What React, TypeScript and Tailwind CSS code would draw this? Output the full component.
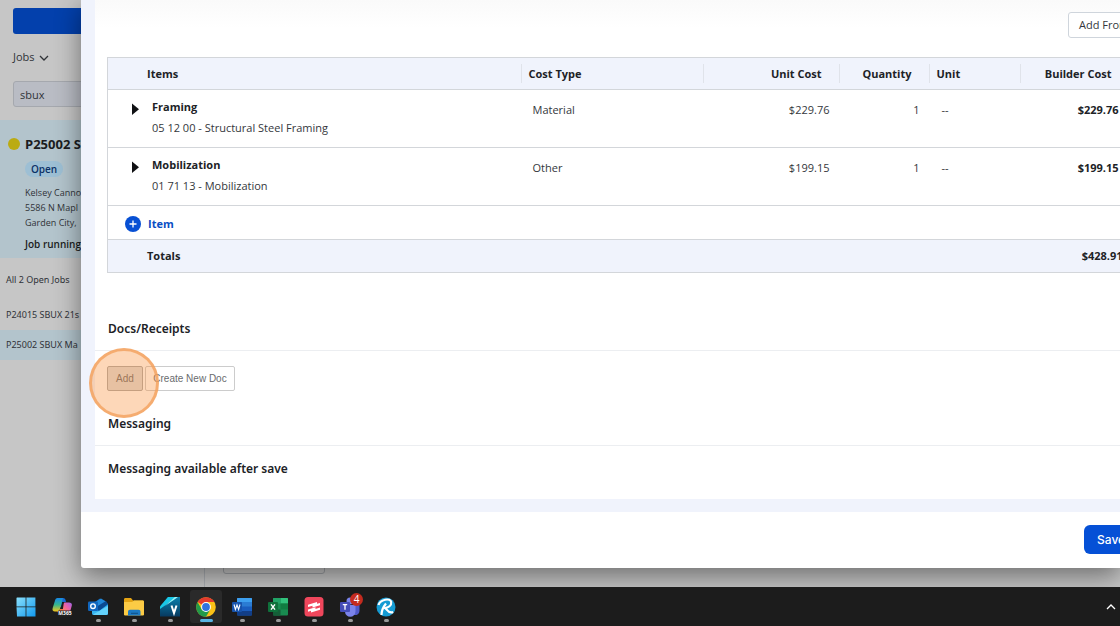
import type { ReactNode } from "react";

type CostItem = {
  name: string;
  code: string;
  type: string;
  unitCost: string;
  quantity: string;
  unit: string;
  builderCost: string;
};

const items: CostItem[] = [
  {
    name: "Framing",
    code: "05 12 00 - Structural Steel Framing",
    type: "Material",
    unitCost: "$229.76",
    quantity: "1",
    unit: "--",
    builderCost: "$229.76",
  },
  {
    name: "Mobilization",
    code: "01 71 13 - Mobilization",
    type: "Other",
    unitCost: "$199.15",
    quantity: "1",
    unit: "--",
    builderCost: "$199.15",
  },
];

function Sidebar() {
  return (
    <aside className="w-[205px] border-r border-[#acafb4] pt-2 text-[#303338]">
      <div className="px-[13px]">
        <button type="button" aria-label="New job" className="block h-[26px] w-full rounded-[3px] bg-[#0340ac]" />
        <button type="button" className="mt-3 flex h-[22px] items-center gap-1 text-[11px]">
          Jobs
          <svg viewBox="0 0 10 10" className="mt-[2px] h-[10px] w-[10px]" fill="none" stroke="currentColor" strokeWidth="1.3">
            <path d="M1 3l4 4 4-4" />
          </svg>
        </button>
        <input
          type="text"
          aria-label="Search jobs"
          defaultValue="sbux"
          className="mt-[13px] block h-[26px] w-full rounded-[3px] border border-[#a5a8ae] bg-[#b9bcc4] px-[6px] text-[11px] outline-none"
        />
      </div>
      <section className="mt-[13px] h-[138px] bg-[#b3c4cc] pt-[14px] pl-[25px]">
        <h2 className="-ml-[17px] flex items-center gap-[5px] text-[13px] leading-5 font-bold text-[#1b1d21]">
          <span className="h-3 w-3 rounded-full bg-[#bbab12]" />
          P25002 S
        </h2>
        <div className="mt-[7px] flex">
          <span className="rounded-full bg-[#9dbfd4] px-[6px] text-[10px] leading-4 font-semibold text-[#0b3166]">
            Open
          </span>
        </div>
        <p className="mt-2 text-[9px] leading-[15px]">
          Kelsey Canno
          <br />
          5586 N Mapl
          <br />
          Garden City,
        </p>
        <p className="mt-[7px] text-[10px] leading-[15px] font-semibold text-[#1b1d21]">Job running</p>
      </section>
      <p className="mt-[7px] px-[6px] font-[Noto_Sans,sans-serif] text-[9px] leading-[30px]">All 2 Open Jobs</p>
      <ul className="mt-[5px] font-[Noto_Sans,sans-serif] text-[9px] leading-[30px]">
        <li>
          <a href="#p24015" className="block px-[6px]">P24015 SBUX 21s</a>
        </li>
        <li>
          <a href="#p25002" className="block bg-[#b3c4cc] px-[6px]">P25002 SBUX Ma</a>
        </li>
      </ul>
    </aside>
  );
}

function HeadCell({ children, right }: { children?: ReactNode; right?: boolean }) {
  return (
    <th scope="col" className="p-0">
      <div className={`h-[19px] border-l border-[#e0e3ea] leading-[19px] ${right ? "pr-[17px] text-right" : "pl-[7px] text-left"}`}>
        {children}
      </div>
    </th>
  );
}

function ItemsTable() {
  return (
    <table className="w-[1240px] table-fixed border-collapse border border-[#d3d6da] text-[11px] text-[#34373c]">
      <colgroup>
        <col className="w-[413px]" />
        <col className="w-[182px]" />
        <col className="w-[136px]" />
        <col className="w-[90px]" />
        <col className="w-[91px]" />
        <col className="w-[109px]" />
        <col />
      </colgroup>
      <thead>
        <tr className="h-[32px] border-b border-[#d3d6da] bg-[#f0f3fc] font-bold text-[#202226]">
          <th scope="col" className="p-0 pl-[39px] text-left leading-[19px]">Items</th>
          <HeadCell>Cost Type</HeadCell>
          <HeadCell right>Unit Cost</HeadCell>
          <HeadCell right>Quantity</HeadCell>
          <HeadCell>Unit</HeadCell>
          <HeadCell right>Builder Cost</HeadCell>
          <HeadCell />
        </tr>
      </thead>
      <tbody>
        {items.map((item) => (
          <tr key={item.code} className="h-[58px] border-b border-[#d3d6da] align-top leading-5">
            <td className="p-0 pt-[7px]">
              <div className="flex">
                <button type="button" aria-label={`Expand ${item.name}`} className="mt-[6px] ml-6 h-3 w-5">
                  <svg viewBox="0 0 20 12" className="h-3 w-5" fill="#101114">
                    <path d="M0 .5l7 5.700-7 5.800z" />
                  </svg>
                </button>
                <div>
                  <div className="font-bold text-[#202226]">{item.name}</div>
                  <div className="leading-[22px]">{item.code}</div>
                </div>
              </div>
            </td>
            <td className="p-0 pt-[10px] pl-3">{item.type}</td>
            <td className="p-0 pt-[10px] pr-[9px] text-right">{item.unitCost}</td>
            <td className="p-0 pt-[10px] pr-[9px] text-right">{item.quantity}</td>
            <td className="p-0 pt-[10px] pl-[13px]">{item.unit}</td>
            <td className="p-0 pt-[10px] pr-[10px] text-right font-bold text-[#202226]">{item.builderCost}</td>
            <td />
          </tr>
        ))}
        <tr className="h-[34px] border-b border-[#d3d6da]">
          <td colSpan={7} className="p-0 pt-[3px] pl-[17px]">
            <button type="button" className="flex items-center gap-[7px] font-bold text-[#0a4fc4]">
              <svg viewBox="0 0 16 16" className="h-4 w-4" fill="none">
                <circle cx="8" cy="8" r="8" fill="#0750d4" />
                <path d="M8 4.500v7M4.500 8h7" stroke="#fff" strokeWidth="1.300" />
              </svg>
              Item
            </button>
          </td>
        </tr>
      </tbody>
      <tfoot>
        <tr className="h-[33px] bg-[#f0f3fc] font-bold text-[#202226]">
          <th scope="row" colSpan={5} className="p-0 pl-[39px] text-left">Totals</th>
          <td className="p-0 pr-[6px] text-right">$428.91</td>
          <td />
        </tr>
      </tfoot>
    </table>
  );
}

function Dialog() {
  return (
    <div
      role="dialog"
      aria-label="Purchase order"
      className="relative mb-[19px] ml-[81px] overflow-hidden rounded-bl-[3px] bg-white shadow-[0_8px_26px_rgba(0,0,0,0.45)]"
    >
      <div className="bg-[#f0f3fc] pb-[13px] pl-[14px]">
        <div className="bg-white bg-linear-to-b from-[#fafafa] to-white to-[28px] pt-3 pb-5">
          <div className="flex justify-end overflow-hidden">
            <button
              type="button"
              className="-mr-10 h-[26px] w-[92px] shrink-0 rounded-[3px] border border-[#cfd5dc] bg-white pl-[10px] text-left text-[11px] whitespace-nowrap text-[#34373c]"
            >
              Add From
            </button>
          </div>
          <div className="mt-[19px] overflow-hidden pl-3">
            <ItemsTable />
          </div>

          <section className="mt-[46px]">
            <h3 className="border-b border-[#eceef1] pb-[11px] pl-[13px] font-[Noto_Sans,sans-serif] text-[12px] leading-5 font-semibold text-[#202226]">
              Docs/Receipts
            </h3>
            <div className="flex gap-[2px] pt-[15px] pl-3 font-[Liberation_Sans,Arial,sans-serif] text-[10px] text-[#6a6b6e]">
              <div className="relative">
                <button type="button" className="h-[25px] w-9 rounded-[2px] border border-[#aaa] bg-[#dedede]">
                  Add
                </button>
                <span className="pointer-events-none absolute -top-[18px] -left-[18px] h-[70px] w-[70px] rounded-full border-[3px] border-[#f4a25f]/80 bg-[#f98b33]/35" />
              </div>
              <button type="button" className="h-[25px] w-[90px] rounded-[2px] border border-[#ccc]">
                Create New Doc
              </button>
            </div>
          </section>

          <section className="mt-[23px]">
            <h3 className="border-b border-[#eceef1] pb-[11px] pl-[13px] font-[Noto_Sans,sans-serif] text-[12px] leading-5 font-semibold text-[#202226]">
              Messaging
            </h3>
            <p className="pt-[13px] pl-[13px] font-[Noto_Sans,sans-serif] text-[12px] leading-5 font-semibold text-[#202226]">
              Messaging available after save
            </p>
          </section>
        </div>
      </div>
      <footer className="flex h-[56px] justify-end pt-[13px]">
        <button
          type="button"
          className="-mr-5 h-[29px] w-14 rounded-[6px] bg-[#0550d6] pl-[13px] text-left font-[Inter,sans-serif] text-[12px] font-medium text-white"
        >
          Save
        </button>
      </footer>
    </div>
  );
}

function WindowsIcon() {
  return (
    <>
      <linearGradient id="win" x1="0" y1="0" x2="1" y2="1">
        <stop stopColor="#8ae0fc" />
        <stop offset="1" stopColor="#1199ee" />
      </linearGradient>
      <path fill="url(#win)" d="M1 .5h8.600v9H.5V1zM10.400.5h9v9h-9zM.5 10.300h9.100v9.200H1zM10.400 10.300h9.100v9.200h-9.100z" />
    </>
  );
}

function CopilotIcon() {
  return (
    <>
      <linearGradient id="cop1" x1="0" y1="0" x2="0" y2="1">
        <stop stopColor="#1688e8" />
        <stop offset=".5" stopColor="#36b68c" />
        <stop offset="1" stopColor="#f5c71a" />
      </linearGradient>
      <linearGradient id="cop2" x1="1" y1="0" x2="0" y2="1">
        <stop stopColor="#9b63eb" />
        <stop offset=".5" stopColor="#ed60a3" />
        <stop offset="1" stopColor="#ff8b50" />
      </linearGradient>
      <path fill="#1769d2" d="M6 1h5c2 0 2.500 1 3 4h-4L9 10H5z" />
      <path fill="url(#cop1)" d="M5.500 1H11L8 12c-.6 2-1.200 2.500-3 2.500H3C.8 14.500.1 13 .7 11L3 3.500C3.500 2 4 1 5.500 1z" />
      <path fill="#f2703f" d="M5 14.500c2 0 2.500-1 3-2.500h4l-1 4H8c-1.500 0-2-.5-3-1.500z" />
      <path fill="url(#cop2)" d="M12.500 5.500H17c2.500 0 3.300 1.500 2.700 3.500L18 15h-7.500l1-7c.2-1.500.5-2.500 1-2.500z" />
      <rect x="6" y="13.500" width="14" height="6" rx="1" fill="#222" />
      <text x="13" y="18.300" fontSize="5" fontWeight="700" textAnchor="middle" fill="#fff">M365</text>
    </>
  );
}

function OutlookIcon() {
  return (
    <>
      <path fill="#1268bb" d="M4 7l8-5.500L20 7v10.500H4z" />
      <path fill="#2188d9" d="M6 6l7-4.500 5 3L8 11z" />
      <path fill="#0b4a92" d="M8 10l10-6 2 3-9 7z" />
      <path fill="#36b5f1" d="M4 11l7 3 9-6.500V16a2 2 0 01-2 2H6a2 2 0 01-2-2z" />
      <path fill="#63d2fb" d="M5 17.500L20 9v7a2 2 0 01-2 2H6z" />
      <rect y="4.500" width="10" height="9.500" rx="1.200" fill="#1166be" />
      <circle cx="5" cy="9.200" r="2.300" fill="none" stroke="#fff" strokeWidth="1.400" />
    </>
  );
}

function FolderIcon() {
  return (
    <>
      <path fill="#e5a414" d="M0 2.500C0 1.500.5 1 1.500 1H7l2 2.500h9.500c1 0 1.500.5 1.500 1.500v13H0z" />
      <path fill="#fccb45" d="M0 5h8l2-1.500h8.500c1 0 1.500.5 1.500 1.500v12c0 1-.5 1.500-1.500 1.500h-17C.5 18.500 0 18 0 17z" />
      <path fill="#1b79c4" d="M4 18.500V15c0-1.500.7-2.300 2-2.300h8.500c1.300 0 2 .8 2 2.300v3.500z" />
      <path fill="#125791" d="M7 15.700h7v1.300H7z" />
    </>
  );
}

function VeeIcon() {
  return (
    <>
      <linearGradient id="vee" x1="0" y1="0" x2="0" y2="1">
        <stop stopColor="#087fac" />
        <stop offset="1" stopColor="#083a60" />
      </linearGradient>
      <path fill="url(#vee)" d="M8 0h12v19.500H0V9.500z" />
      <path fill="#1ac7e5" d="M8 0h9L0 12V9.500z" />
      <path fill="#9cf4f6" d="M15 0h3L5 9z" />
      <path fill="none" stroke="#fff" strokeWidth="2" d="M11.500 8.500l2.500 7.500 2.500-7.500" />
    </>
  );
}

function ChromeIcon() {
  return (
    <>
      <circle cx="10" cy="10" r="9.800" fill="#fbc116" />
      <path fill="#e33b2e" d="M10 10L1.510 5.100A9.800 9.800 0 0118.490 5.100H10z" />
      <path fill="#229a4a" d="M1.510 5.100L5.760 12.450 10 10l4.240 2.450L10 19.800A9.800 9.800 0 011.510 5.100z" />
      <circle cx="10" cy="10" r="4.900" fill="#fff" />
      <circle cx="10" cy="10" r="3.900" fill="#2f73e0" />
    </>
  );
}

function WordIcon() {
  return (
    <>
      <rect x="5" y="1" width="15" height="17.500" rx="1" fill="#1a5dbe" />
      <path fill="#3d9fee" d="M5 2c0-.6.400-1 1-1h13c.6 0 1 .4 1 1v3.500H5z" />
      <path fill="#2b7cd3" d="M5 5.500h15v4H5z" />
      <path fill="#123e87" d="M5 14h15v3.500c0 .6-.4 1-1 1H6c-.6 0-1-.4-1-1z" />
      <rect y="5" width="10" height="10" rx="1" fill="#1753ab" />
      <path d="M2 7.500l1.400 5L5 8l1.600 4.500 1.400-5" fill="none" stroke="#fff" strokeWidth="1.100" />
    </>
  );
}

function ExcelIcon() {
  return (
    <>
      <rect x="5" y="1" width="15" height="17.500" rx="1" fill="#198b50" />
      <path fill="#32c17c" d="M12.500 1H19c.6 0 1 .4 1 1v4.500h-7.500z" />
      <path fill="#21a366" d="M5 2c0-.6.400-1 1-1h6.500v5.500H5z" />
      <path fill="#155e38" d="M5 12.500h7.500v6H6c-.6 0-1-.4-1-1z" />
      <path fill="#107c41" d="M12.500 6.500H20v6h-7.500z" />
      <rect y="5" width="10" height="10" rx="1" fill="#0f713b" />
      <path d="M3 7.300l4 5.400M7 7.300l-4 5.400" stroke="#fff" strokeWidth="1.400" />
    </>
  );
}

function StripesIcon() {
  return (
    <>
      <rect x=".5" y="0" width="19" height="19.500" rx="3.500" fill="#f0475c" />
      <path fill="#fff" d="M4 7.800L13 5v1.800l3-.9v2.300L8.500 10.400V8.800L4 10zM4 12.400l7.500-2.200v1.700l4.500-1.400v2.300L7 15.500v-1.700l-3 .9z" />
    </>
  );
}

function TeamsIcon() {
  return (
    <>
      <circle cx="15.500" cy="5" r="2.800" fill="#5a61cf" />
      <circle cx="10" cy="4" r="3.500" fill="#7881e8" />
      <path fill="#5059c9" d="M13 8h6.500v6a4 4 0 01-6 3.500z" />
      <path fill="#7b83eb" d="M5 8h10.500v6.500a5 5 0 01-10.500 0z" />
      <rect y="5" width="10" height="10" rx="1" fill="#454db8" />
      <path d="M2.800 7.700h4.400M5 7.700v5" stroke="#fff" strokeWidth="1.300" />
    </>
  );
}

function SwirlIcon() {
  return (
    <>
      <circle cx="10" cy="10" r="9.500" fill="#159bd3" />
      <path fill="none" stroke="#fff" strokeWidth="2.200" d="M5.500 18C5.500 14 8 9 10 6.500M2.500 8C4 2.500 14.500.5 15.200 5c.5 3.500-3 5.500-6 6 2 1.500 3 6 8 4" />
    </>
  );
}

type App = { name: string; icon: ReactNode; state?: "running" | "active"; badge?: string };

const apps: App[] = [
  { name: "Start", icon: <WindowsIcon /> },
  { name: "Copilot", icon: <CopilotIcon /> },
  { name: "Outlook", icon: <OutlookIcon />, state: "running" },
  { name: "File Explorer", icon: <FolderIcon />, state: "running" },
  { name: "Viewer", icon: <VeeIcon />, state: "running" },
  { name: "Chrome", icon: <ChromeIcon />, state: "active" },
  { name: "Word", icon: <WordIcon />, state: "running" },
  { name: "Excel", icon: <ExcelIcon />, state: "running" },
  { name: "Planner", icon: <StripesIcon />, state: "running" },
  { name: "Teams", icon: <TeamsIcon />, state: "running", badge: "4" },
  { name: "Revu", icon: <SwirlIcon />, state: "running" },
];

function Taskbar() {
  return (
    <nav aria-label="Taskbar" className="flex h-[39px] items-center gap-1 bg-[#1c1c1c] pl-[10px]">
      {apps.map((app) => (
        <button
          key={app.name}
          type="button"
          aria-label={app.name}
          className={`relative flex h-[33px] w-8 flex-col items-center rounded-[3px] pt-[7px] ${app.state === "active" ? "bg-[#2a2a2a]" : ""}`}
        >
          <svg viewBox="0 0 20 20" className="h-5 w-5">{app.icon}</svg>
          {app.state === "running" && <span className="mt-[2px] h-[3px] w-[5px] rounded-full bg-[#9a9a9a]" />}
          {app.state === "active" && <span className="mt-[2px] h-[3px] w-[13px] rounded-full bg-[#58b4e4]" />}
          {app.badge && (
            <span className="absolute top-[3px] right-[3px] h-[13px] w-[13px] rounded-full bg-[#c42b1f] text-center text-[10px] leading-[13px] text-white">
              {app.badge}
            </span>
          )}
        </button>
      ))}
      <button type="button" aria-label="Show hidden icons" className="mr-[3px] ml-auto p-px">
        <svg viewBox="0 0 10 10" className="h-[10px] w-[10px]" fill="none" stroke="#fff" strokeWidth="1.300">
          <path d="M1 7l4-4 4 4" />
        </svg>
      </button>
    </nav>
  );
}

export default function App() {
  return (
    <div className="flex min-h-screen flex-col overflow-hidden bg-[#c6c6c6] font-[Open_Sans,Noto_Sans,sans-serif]">
      <main className="grid flex-1 grid-cols-1 overflow-hidden">
        <div className="col-start-1 row-start-1 flex">
          <Sidebar />
          <div className="flex items-end pb-[13px] pl-[18px]">
            <div className="h-8 w-[102px] rounded-[3px] border border-[#9da0a4]" />
          </div>
        </div>
        <div className="col-start-1 row-start-1 min-w-0">
          <Dialog />
        </div>
      </main>
      <Taskbar />
    </div>
  );
}
